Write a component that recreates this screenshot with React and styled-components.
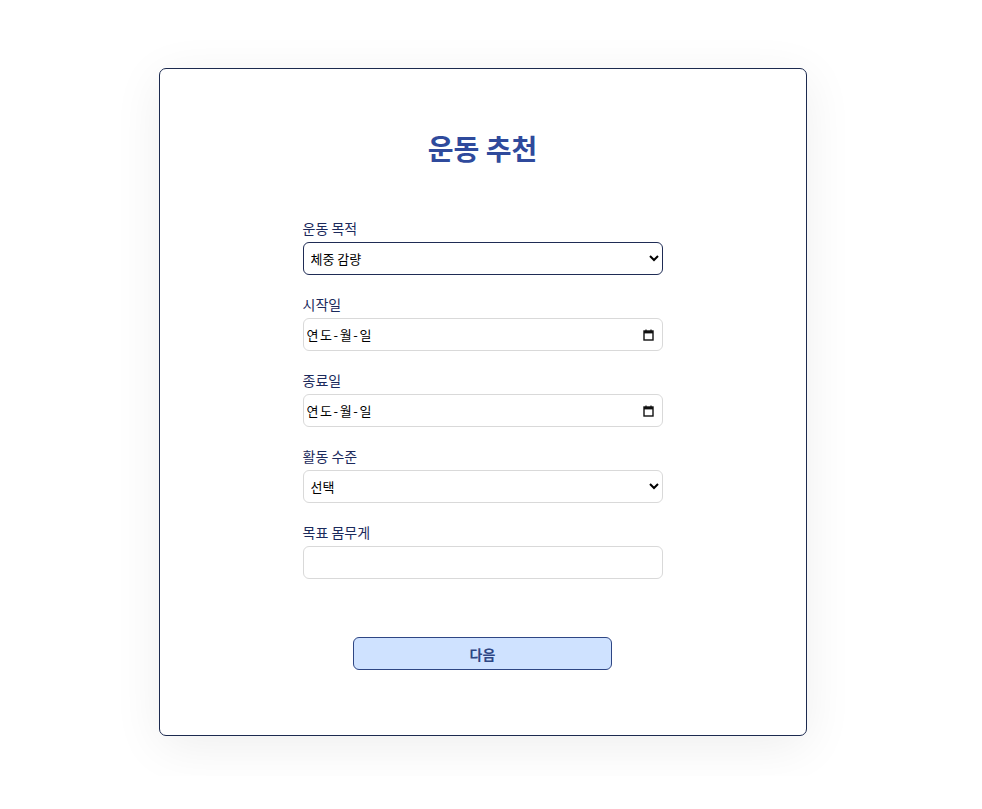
import React, { useState } from "react";
import styled, { createGlobalStyle } from "styled-components";

const GlobalStyle = createGlobalStyle`
  body {
    margin: 0;
    background: #ffffff;
    font-family: "Noto Sans CJK KR", "Noto Sans", sans-serif;
  }
`;

const Page = styled.div`
  display: flex;
  justify-content: center;
  padding: 68px 17px 40px 0;
`;

const Card = styled.div`
  width: 648px;
  box-sizing: border-box;
  border: 1px solid #1c2a4f;
  border-radius: 7px;
  background: #fff;
  box-shadow: 0 10px 50px rgba(0, 0, 0, 0.07);
  padding: 62px 0 65px;
  display: flex;
  flex-direction: column;
  align-items: center;
`;

const Title = styled.h1`
  margin: 0 0 53px;
  font-size: 28px;
  line-height: 34px;
  font-weight: 700;
  color: #2f4a9c;
`;

const Form = styled.form`
  width: 360px;
  display: flex;
  flex-direction: column;
  gap: 19px;
`;

const Field = styled.div`
  display: flex;
  flex-direction: column;
  gap: 4px;
`;

const Label = styled.label`
  font-size: 14px;
  line-height: 20px;
  color: #1b2a5c;
`;

const Select = styled.select`
  height: 33px;
  box-sizing: border-box;
  border: 1px solid ${(p) => (p.$active ? "#1f2c55" : "#d9d9d9")};
  border-radius: 6px;
  background: #fff;
  padding: 0 3px;
  font-family: "Noto Sans CJK KR", "Noto Sans", sans-serif;
  font-size: 13px;
  color: #000;
  outline: none;
`;

const DateBox = styled.div`
  height: 33px;
  box-sizing: border-box;
  border: 1px solid #d9d9d9;
  border-radius: 6px;
  display: flex;
  align-items: center;
  padding: 0 8px 0 3px;
`;

const DateText = styled.input`
  flex: 1;
  border: none;
  outline: none;
  padding: 0;
  font-family: "Noto Sans CJK KR", "Noto Sans", sans-serif;
  font-size: 13px;
  letter-spacing: 1.6px;
  &::placeholder {
    color: #000;
  }
`;

const TextInput = styled.input`
  height: 33px;
  box-sizing: border-box;
  border: 1px solid #d9d9d9;
  border-radius: 6px;
  padding: 0 8px;
  font-size: 13px;
  outline: none;
`;

const NextButton = styled.button`
  margin-top: 58px;
  width: 259px;
  height: 33px;
  border: 1px solid #2e4684;
  border-radius: 6px;
  background: #cfe2ff;
  color: #2e4684;
  font-family: "Noto Sans CJK KR", "Noto Sans", sans-serif;
  font-size: 14px;
  font-weight: 700;
  cursor: pointer;
`;

function CalendarIcon() {
  return (
    <svg width="11" height="12" viewBox="0 0 11 12">
      <rect x="1" y="2" width="9" height="9" fill="none" stroke="#111" strokeWidth="1.4" />
      <rect x="1" y="2" width="9" height="2.4" fill="#111" />
      <line x1="3" y1="0.5" x2="3" y2="2.5" stroke="#111" strokeWidth="1.2" />
      <line x1="8" y1="0.5" x2="8" y2="2.5" stroke="#111" strokeWidth="1.2" />
    </svg>
  );
}

function DateField({ label }) {
  return (
    <Field>
      <Label>{label}</Label>
      <DateBox>
        <DateText type="text" placeholder="연도-월-일" />
        <CalendarIcon />
      </DateBox>
    </Field>
  );
}

export default function App() {
  const [goal, setGoal] = useState("weight");
  const [level, setLevel] = useState("");

  return (
    <>
      <GlobalStyle />
      <Page>
        <Card>
          <Title>운동 추천</Title>
          <Form onSubmit={(e) => e.preventDefault()}>
            <Field>
              <Label>운동 목적</Label>
              <Select $active value={goal} onChange={(e) => setGoal(e.target.value)}>
                <option value="weight">체중 감량</option>
                <option value="muscle">근력 증가</option>
                <option value="health">건강 유지</option>
              </Select>
            </Field>
            <DateField label="시작일" />
            <DateField label="종료일" />
            <Field>
              <Label>활동 수준</Label>
              <Select value={level} onChange={(e) => setLevel(e.target.value)}>
                <option value="">선택</option>
                <option value="low">낮음</option>
                <option value="mid">보통</option>
                <option value="high">높음</option>
              </Select>
            </Field>
            <Field>
              <Label>목표 몸무게</Label>
              <TextInput type="number" />
            </Field>
          </Form>
          <NextButton type="button">다음</NextButton>
        </Card>
      </Page>
    </>
  );
}
